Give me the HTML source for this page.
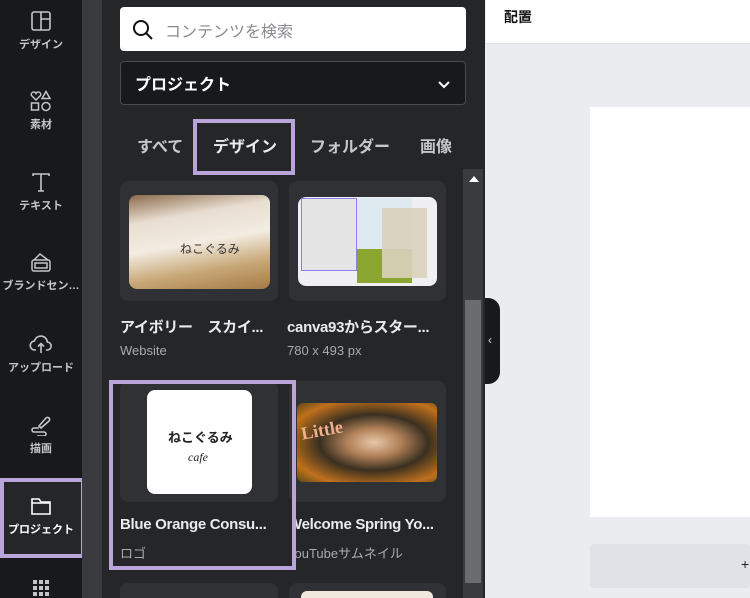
<!DOCTYPE html>
<html style="overflow:hidden;height:598px"><head><meta charset="utf-8"><style>
*{margin:0;padding:0;box-sizing:border-box}
body{width:750px;height:598px;overflow:hidden;position:relative;background:#ebecf0;font-family:"Liberation Sans","Noto Sans CJK JP",sans-serif}
.abs{position:absolute}
#side{left:0;top:0;width:82px;height:598px;background:#18191b}
.it{position:absolute;left:0;width:82px;text-align:center;color:#c4c5c9;font-size:11px;font-weight:bold}
.it svg{display:block;margin:0 auto 4px}
#strip{left:82px;top:0;width:20px;height:598px;background:#3a3b3e}
#panel{left:102px;top:0;width:383px;height:598px;background:#252628}
.card{position:absolute;background:#303134;border-radius:8px}
.tt{position:absolute;color:#e9eaec;font-size:15px;font-weight:bold;white-space:nowrap;letter-spacing:-0.3px}
.st{position:absolute;color:#a9aaad;font-size:13px;white-space:nowrap}
.tab{position:absolute;top:133px;color:#c7c8cb;font-size:16px;font-weight:bold}
</style></head><body>
<div class="abs" style="left:486px;top:0;width:264px;height:44px;background:#fff;border-bottom:1px solid #dcdde2"></div>
<div class="abs" style="left:504px;top:7px;font-size:14px;font-weight:bold;color:#111">配置</div>
<div class="abs" style="left:590px;top:107px;width:160px;height:410px;background:#fff"></div>
<div class="abs" style="left:590px;top:544px;width:160px;height:44px;background:#e0e2e8;border-radius:4px"></div>
<div class="abs" style="left:741px;top:556px;font-size:14px;color:#222">+</div>

<div id="side" class="abs"></div>
<div class="it" style="top:10px"><svg width="22" height="22" viewBox="0 0 22 22" fill="none" stroke="#c4c5c9" stroke-width="1.6"><rect x="2" y="2" width="18" height="18" rx="2"/><path d="M11 2v18M11 9h9"/></svg>デザイン</div>
<div class="it" style="top:90px"><svg width="24" height="22" viewBox="0 0 24 22" fill="none" stroke="#c4c5c9" stroke-width="1.5"><path d="M7 10 2.5 5.5a2.3 2.3 0 0 1 4.5-2 2.3 2.3 0 0 1 4.5 2z"/><path d="M17 1.5l4 7h-8z"/><rect x="2.5" y="13" width="7" height="7"/><circle cx="17" cy="16.5" r="4"/></svg>素材</div>
<div class="it" style="top:171px"><svg width="22" height="22" viewBox="0 0 22 22" fill="none" stroke="#c4c5c9" stroke-width="1.6"><path d="M3 5V3h16v2M11 3v17M8 20h6"/></svg>テキスト</div>
<div class="it" style="top:251px"><svg width="22" height="22" viewBox="0 0 22 22" fill="none" stroke="#c4c5c9" stroke-width="1.5"><rect x="2" y="9" width="18" height="11" rx="2"/><rect x="5" y="12" width="12" height="5"/><path d="M4 9l6-6 8 6"/></svg>ブランドセン…</div>
<div class="it" style="top:333px"><svg width="24" height="22" viewBox="0 0 24 22" fill="none" stroke="#c4c5c9" stroke-width="1.6"><path d="M7 17H6a4.5 4.5 0 0 1-.5-9 6.5 6.5 0 0 1 12.8 1A4 4 0 0 1 18 17h-1M12 20v-9M9 13.5l3-3 3 3"/></svg>アップロード</div>
<div class="it" style="top:414px"><svg width="22" height="22" viewBox="0 0 22 22" fill="none" stroke="#c4c5c9" stroke-width="1.6"><path d="M9 12l7-8a2 2 0 0 1 3 3l-8 7zM9 14H4a2 2 0 0 0 0 4h10a2 2 0 0 1 0 4H7"/></svg>描画</div>
<div class="abs" style="left:0;top:478px;width:85px;height:80px;background:#252628;border:4px solid #b9a5da"></div>
<div class="it" style="top:495px;color:#fff"><svg width="24" height="22" viewBox="0 0 24 22" fill="none" stroke="#fff" stroke-width="1.6"><path d="M3 4h7l2 3h9v12H3z"/><path d="M3 8h18"/></svg>プロジェクト</div>
<div class="it" style="top:578px"><svg width="20" height="20" viewBox="0 0 20 20" fill="#c4c5c9"><rect x="2" y="2" width="4" height="4"/><rect x="8" y="2" width="4" height="4"/><rect x="14" y="2" width="4" height="4"/><rect x="2" y="8" width="4" height="4"/><rect x="8" y="8" width="4" height="4"/><rect x="14" y="8" width="4" height="4"/><rect x="2" y="14" width="4" height="4"/><rect x="8" y="14" width="4" height="4"/><rect x="14" y="14" width="4" height="4"/></svg></div>

<div id="strip" class="abs"></div>
<div id="panel" class="abs"></div>
<div class="abs" style="left:485px;top:298px;width:15px;height:86px;background:#18191b;border-radius:0 12px 12px 0"></div>
<div class="abs" style="left:488px;top:333px;color:#ddd;font-size:12px">‹</div>

<div class="abs" style="left:120px;top:7px;width:346px;height:44px;background:#fff;border-radius:4px"></div>
<svg class="abs" style="left:131px;top:18px" width="24" height="24" viewBox="0 0 24 24" fill="none" stroke="#111" stroke-width="2"><circle cx="10" cy="10" r="7"/><path d="M15 15l6 6"/></svg>
<div class="abs" style="left:165px;top:18px;font-size:16px;color:#8a8b90">コンテンツを検索</div>
<div class="abs" style="left:120px;top:61px;width:346px;height:44px;background:#18191b;border:1px solid #4a4b4f;border-radius:4px"></div>
<div class="abs" style="left:135px;top:71px;font-size:16px;color:#fff;font-weight:bold">プロジェクト</div>
<svg class="abs" style="left:437px;top:80px" width="14" height="10" viewBox="0 0 14 10" fill="none" stroke="#fff" stroke-width="2"><path d="M2 2l5 5 5-5"/></svg>

<div class="tab" style="left:137px">すべて</div>
<div class="abs" style="left:193px;top:119px;width:102px;height:56px;border:4px solid #b9a5da"></div>
<div class="tab" style="left:213px;color:#e9eaec">デザイン</div>
<div class="tab" style="left:310px">フォルダー</div>
<div class="tab" style="left:420px">画像</div>

<div class="abs" style="left:463px;top:169px;width:20px;height:429px;background:#3a3b3e"></div>
<div class="abs" style="left:465px;top:300px;width:16px;height:283px;background:#6b6c6f"></div>
<div class="abs" style="left:469px;top:176px;width:0;height:0;border-left:5px solid transparent;border-right:5px solid transparent;border-bottom:6px solid #fff"></div>

<div class="card" style="left:120px;top:181px;width:158px;height:120px"></div>
<div class="abs" style="left:129px;top:195px;width:141px;height:94px;border-radius:8px;background:linear-gradient(170deg,#8a6a4a 0%,#e8ddd0 25%,#f3ece2 50%,#c8a878 75%,#a47a44 100%)"></div>
<div class="abs" style="left:180px;top:240px;font-size:12px;color:#333">ねこぐるみ</div>
<div class="card" style="left:289px;top:181px;width:157px;height:120px"></div>
<div class="abs" style="left:298px;top:197px;width:139px;height:89px;border-radius:8px;background:#f0f0f2"></div>
<div class="abs" style="left:301px;top:198px;width:56px;height:73px;background:#e5e5e5;border:1px solid #8d7df0"></div>
<div class="abs" style="left:357px;top:198px;width:55px;height:85px;background:linear-gradient(#dfeaf0 60%,#8aa630 60%)"></div>
<div class="abs" style="left:382px;top:208px;width:45px;height:70px;background:#d8d2bc;opacity:.9"></div>

<div class="tt" style="left:120px;top:316px">アイボリー　スカイ...</div>
<div class="st" style="left:120px;top:343px">Website</div>
<div class="tt" style="left:287px;top:316px">canva93からスター...</div>
<div class="st" style="left:287px;top:343px">780 x 493 px</div>

<div class="card" style="left:120px;top:381px;width:158px;height:121px"></div>
<div class="abs" style="left:147px;top:390px;width:105px;height:104px;border-radius:8px;background:#fff"></div>
<div class="abs" style="left:168px;top:427px;font-size:13px;color:#222;font-weight:bold">ねこぐるみ</div>
<div class="abs" style="left:188px;top:450px;font-size:12px;color:#222;font-style:italic;font-family:'Liberation Serif',serif">cafe</div>
<div class="card" style="left:289px;top:381px;width:157px;height:121px"></div>
<div class="abs" style="left:297px;top:403px;width:140px;height:79px;border-radius:6px;background:radial-gradient(ellipse at 55% 50%,#e8c8a8 0%,#b08058 25%,#3a3020 50%,#c0701c 80%,#5a4a1a 100%)"></div>
<div class="abs" style="left:301px;top:420px;font-size:18px;font-weight:bold;color:#f0b090;font-family:'Liberation Serif',serif;transform:rotate(-10deg)">Little</div>

<div class="abs" style="left:109px;top:380px;width:187px;height:190px;border:4px solid #b9a5da"></div>
<div class="tt" style="left:120px;top:516px">Blue Orange Consu...</div>
<div class="st" style="left:120px;top:543px">ロゴ</div>
<div class="tt" style="left:288px;top:516px;clip-path:inset(0 0 0 8px)">Welcome Spring Yo...</div>
<div class="st" style="left:287px;top:543px;clip-path:inset(0 0 0 9px)">YouTubeサムネイル</div>

<div class="card" style="left:120px;top:583px;width:158px;height:15px;border-radius:8px 8px 0 0"></div>
<div class="card" style="left:289px;top:583px;width:157px;height:15px;border-radius:8px 8px 0 0"></div>
<div class="abs" style="left:301px;top:591px;width:132px;height:7px;border-radius:6px 6px 0 0;background:#efe8dc"></div>
</body></html>
